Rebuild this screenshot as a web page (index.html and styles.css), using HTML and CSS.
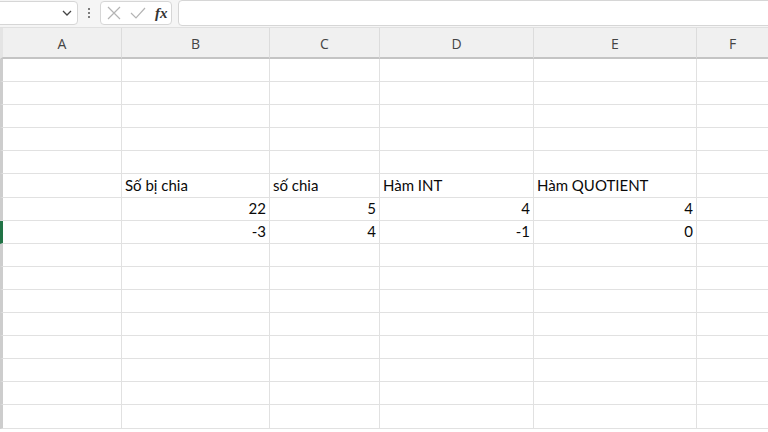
FILE: index.html
```html
<!DOCTYPE html>
<html lang="vi">
<head>
  <meta charset="UTF-8">
  <meta name="viewport" content="width=device-width, initial-scale=1.0">
  <title>Hàm QUOTIENT</title>
  <link rel="stylesheet" href="styles.css">
</head>
<body>
  <!-- Formula bar -->
  <div class="toolbar">
    <div class="name-box">
      <svg class="chevron" width="10" height="6" viewBox="0 0 10 6"><path d="M1 1 L5 5 L9 1" fill="none" stroke="#444" stroke-width="1.3"/></svg>
    </div>
    <div class="dots"><span></span><span></span><span></span></div>
    <div class="fx-box">
      <svg width="14" height="14" viewBox="0 0 14 14"><path d="M1 1 L13 13 M13 1 L1 13" stroke="#b4b4b4" stroke-width="1.2"/></svg>
      <svg width="16" height="14" viewBox="0 0 16 14"><path d="M1 7 L6 12 L15 2" fill="none" stroke="#b4b4b4" stroke-width="1.2"/></svg>
      <span class="fx">fx</span>
    </div>
    <div class="formula-input"></div>
  </div>

  <!-- Sheet -->
  <div class="sheet">
    <div class="row head">
      <div class="cell">A</div>
      <div class="cell">B</div>
      <div class="cell">C</div>
      <div class="cell">D</div>
      <div class="cell">E</div>
      <div class="cell">F</div>
    </div>
    <div class="row"><div class="cell"></div><div class="cell"></div><div class="cell"></div><div class="cell"></div><div class="cell"></div><div class="cell"></div></div>
    <div class="row"><div class="cell"></div><div class="cell"></div><div class="cell"></div><div class="cell"></div><div class="cell"></div><div class="cell"></div></div>
    <div class="row"><div class="cell"></div><div class="cell"></div><div class="cell"></div><div class="cell"></div><div class="cell"></div><div class="cell"></div></div>
    <div class="row"><div class="cell"></div><div class="cell"></div><div class="cell"></div><div class="cell"></div><div class="cell"></div><div class="cell"></div></div>
    <div class="row"><div class="cell"></div><div class="cell"></div><div class="cell"></div><div class="cell"></div><div class="cell"></div><div class="cell"></div></div>
    <div class="row">
      <div class="cell"></div>
      <div class="cell">Số bị chia</div>
      <div class="cell">số chia</div>
      <div class="cell">Hàm INT</div>
      <div class="cell">Hàm QUOTIENT</div>
      <div class="cell"></div>
    </div>
    <div class="row">
      <div class="cell"></div>
      <div class="cell num">22</div>
      <div class="cell num">5</div>
      <div class="cell num">4</div>
      <div class="cell num">4</div>
      <div class="cell"></div>
    </div>
    <div class="row selected">
      <div class="cell"></div>
      <div class="cell num">-3</div>
      <div class="cell num">4</div>
      <div class="cell num">-1</div>
      <div class="cell num">0</div>
      <div class="cell"></div>
    </div>
    <div class="row"><div class="cell"></div><div class="cell"></div><div class="cell"></div><div class="cell"></div><div class="cell"></div><div class="cell"></div></div>
    <div class="row"><div class="cell"></div><div class="cell"></div><div class="cell"></div><div class="cell"></div><div class="cell"></div><div class="cell"></div></div>
    <div class="row"><div class="cell"></div><div class="cell"></div><div class="cell"></div><div class="cell"></div><div class="cell"></div><div class="cell"></div></div>
    <div class="row"><div class="cell"></div><div class="cell"></div><div class="cell"></div><div class="cell"></div><div class="cell"></div><div class="cell"></div></div>
    <div class="row"><div class="cell"></div><div class="cell"></div><div class="cell"></div><div class="cell"></div><div class="cell"></div><div class="cell"></div></div>
    <div class="row"><div class="cell"></div><div class="cell"></div><div class="cell"></div><div class="cell"></div><div class="cell"></div><div class="cell"></div></div>
    <div class="row"><div class="cell"></div><div class="cell"></div><div class="cell"></div><div class="cell"></div><div class="cell"></div><div class="cell"></div></div>
    <div class="row"><div class="cell"></div><div class="cell"></div><div class="cell"></div><div class="cell"></div><div class="cell"></div><div class="cell"></div></div>
  </div>
</body>
</html>
```

FILE: styles.css
```css
body {
  margin: 0;
  width: 768px;
  height: 432px;
  overflow: hidden;
  background-color: #ffffff;
  font-family: Lato, "Liberation Sans", sans-serif;
}

.toolbar {
  display: flex;
  align-items: center;
  height: 28px;
  background-color: #f5f5f5;
  border-bottom: 1px solid #e0e0e0;
  box-sizing: border-box;
  padding: 0 0 1px 0;
}

.name-box {
  display: flex;
  align-items: center;
  justify-content: flex-end;
  width: 86px;
  height: 24px;
  margin-left: -8px;
  padding-right: 5px;
  box-sizing: border-box;
  background-color: #fff;
  border: 1px solid #d6d6d6;
  border-radius: 4px;
}

.dots {
  display: flex;
  flex-direction: column;
  gap: 2px;
  width: 22px;
  align-items: center;
}

.dots span {
  width: 2px;
  height: 2px;
  background-color: #555;
  border-radius: 1px;
}

.fx-box {
  display: flex;
  align-items: center;
  gap: 9px;
  width: 72px;
  height: 24px;
  padding-left: 6px;
  box-sizing: border-box;
  background-color: #fff;
  border: 1px solid #d6d6d6;
  border-radius: 4px;
}

.fx {
  font-family: "Liberation Serif", serif;
  font-style: italic;
  font-weight: bold;
  font-size: 15px;
  color: #333;
}

.formula-input {
  flex: 1;
  height: 24px;
  margin-left: 6px;
  margin-right: -6px;
  background-color: #fff;
  border: 1px solid #d6d6d6;
  border-radius: 4px;
}

.row {
  display: grid;
  grid-template-columns: 122px 148px 110px 154px 163px 72px;
  height: 23.1px;
}

.cell {
  display: flex;
  align-items: flex-end;
  padding: 0 3px 3px 3px;
  box-sizing: border-box;
  border-right: 1px solid #e1e1e1;
  border-bottom: 1px solid #e1e1e1;
  font-size: 15px;
  color: #0a0a0a;
  white-space: nowrap;
}

.row .cell:first-child {
  border-left: 3px solid #cdcdcd;
}

.row.selected .cell:first-child {
  border-left-color: #217346;
}

.cell.num {
  justify-content: flex-end;
}

.row.head {
  height: 31px;
  background-color: #f0f0f0;
}

.row.head .cell {
  align-items: center;
  justify-content: center;
  padding: 2px 0 0 0;
  border-right-color: #dcdcdc;
  border-bottom: 2px solid #c4c4c4;
  font-family: "Open Sans", sans-serif;
  font-size: 14px;
  color: #444;
}

.row.head .cell:first-child {
  border-left-color: #e4e4e4;
}
```
